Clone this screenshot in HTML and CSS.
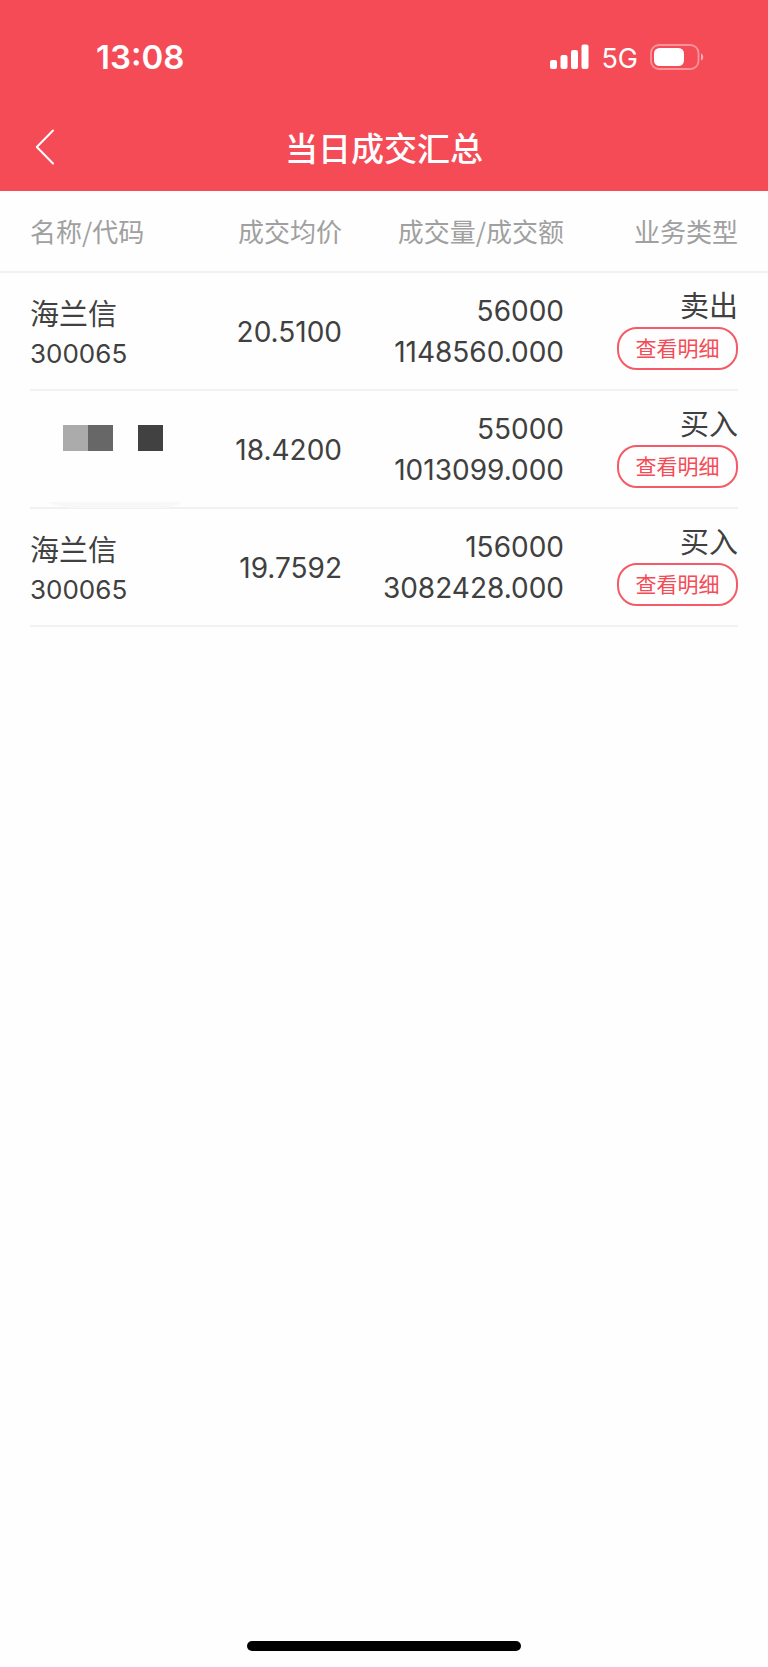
FILE: index.html
```html
<!DOCTYPE html>
<html lang="zh-CN">
<head>
<meta charset="utf-8">
<meta name="viewport" content="width=device-width, initial-scale=1">
<title>当日成交汇总</title>
<link rel="stylesheet" href="styles.css">
</head>
<body class="screen">
<header class="header">
  <div class="status">
    <span class="clock">13:08</span>
    <div class="indicators">
      <svg class="signal" width="39" height="26" viewBox="0 0 39 26" fill="#fff" aria-hidden="true">
        <rect x="0" y="16" width="7" height="9" rx="2"/>
        <rect x="10.500" y="11" width="7" height="14" rx="2"/>
        <rect x="21" y="6" width="7" height="19" rx="2"/>
        <rect x="31.500" y="0.500" width="7" height="24.500" rx="2"/>
      </svg>
      <span class="network">5G</span>
      <svg class="battery" width="54" height="26" viewBox="0 0 54 26" aria-hidden="true">
        <rect x="1" y="1" width="47.500" height="24" rx="8" fill="none" stroke="#fff" stroke-opacity=".4" stroke-width="1.800"/>
        <rect x="4" y="4" width="30" height="18" rx="5.500" fill="#fff"/>
        <path d="M51 9.500c3 1 3 6 0 7z" fill="#fff" fill-opacity=".55"/>
      </svg>
    </div>
  </div>
  <nav class="nav">
    <button class="back" type="button" aria-label="返回">
      <svg width="20" height="36" viewBox="0 0 20 36" fill="none" stroke="#fff" stroke-width="2" stroke-linecap="round" stroke-linejoin="round" aria-hidden="true"><path d="M18 1.500 1.800 18 18 34.500"/></svg>
    </button>
    <h1 class="title">当日成交汇总</h1>
  </nav>
</header>
<main class="content">
  <table class="trades">
    <thead>
      <tr class="head-row"><th class="name" scope="col">名称/代码</th><th scope="col">成交均价</th><th scope="col">成交量/成交额</th><th scope="col">业务类型</th></tr>
    </thead>
    <tbody>
      <tr class="row">
        <td class="name stock"><div>海兰信</div><div class="code">300065</div></td>
        <td class="num">20.5100</td>
        <td class="num"><div>56000</div><div>1148560.000</div></td>
        <td class="type"><div>卖出</div><button class="detail" type="button">查看明细</button></td>
      </tr>
      <tr class="row">
        <td class="name masked">
          <svg class="mask" width="162" height="119" viewBox="0 0 162 119" role="img" aria-label="已隐藏">
            <path d="M16 111h136q-8 6-20 6H49q-18 0-33-6z" fill="#f8f8f8"/>
            <path d="M33 34h25v26H33z" fill="#ababab"/>
            <path d="M58 34h25v26H58z" fill="#676767"/>
            <path d="M108 34h25v26h-25z" fill="#414141"/>
          </svg>
        </td>
        <td class="num">18.4200</td>
        <td class="num"><div>55000</div><div>1013099.000</div></td>
        <td class="type"><div>买入</div><button class="detail" type="button">查看明细</button></td>
      </tr>
      <tr class="row">
        <td class="name stock"><div>海兰信</div><div class="code">300065</div></td>
        <td class="num">19.7592</td>
        <td class="num"><div>156000</div><div>3082428.000</div></td>
        <td class="type"><div>买入</div><button class="detail" type="button">查看明细</button></td>
      </tr>
    </tbody>
  </table>
</main>
<footer class="home"><div class="home-bar"></div></footer>
</body>
</html>
```
FILE: styles.css
```css
* { box-sizing: border-box; }

.screen {
  margin: 0;
  min-height: 100vh;
  display: flex;
  flex-direction: column;
  background: #fefefe;
  color: #404040;
  font-family: Inter, "Noto Sans CJK SC", sans-serif;
}

.header {
  background: #f54b57;
  color: #fff;
}

.status {
  display: flex;
  justify-content: space-between;
  align-items: center;
  height: 106px;
  padding: 8px 64px 0 96px;
}

.clock {
  font-size: 33px;
  font-weight: 600;
}

.indicators {
  display: flex;
  align-items: center;
}

.network {
  padding-top: 2px;
  margin: 0 12px;
  font-size: 27px;
}

.nav {
  display: grid;
  grid-template-columns: 64px 1fr 64px;
  align-items: center;
  height: 85px;
  padding-bottom: 4px;
}

.back {
  display: flex;
  margin: 0;
  padding: 0 0 0 35px;
  border: 0;
  background: none;
}

.title {
  margin: 0;
  text-align: center;
  font-family: "Noto Sans CJK SC", sans-serif;
  font-size: 33px;
  font-weight: 500;
  line-height: 48px;
}

.content { flex: 1; }

.trades,
.trades thead,
.trades tbody {
  display: block;
}

.head-row,
.row {
  display: grid;
  grid-template-columns: 150fr 162fr 222fr 174fr;
  align-items: center;
}

.head-row {
  height: 82px;
  padding: 0 30px 2px;
  border-bottom: 2px solid #f1f1f1;
  color: #a0a0a0;
  font-size: 26px;
}

.head-row th {
  padding: 0;
  font-family: "Noto Sans CJK SC", sans-serif;
  font-weight: 400;
  text-align: right;
  white-space: nowrap;
}

.row {
  min-height: 118px;
  margin: 0 30px;
  border-bottom: 2px solid #f1f1f1;
  font-size: 28px;
  line-height: 41px;
}

.row td {
  padding: 0;
  text-align: right;
}

.head-row .name,
.row .name {
  text-align: left;
}

.row .num { padding-top: 2px; }

.row .stock {
  padding-top: 6px;
  font-size: 29px;
  line-height: 39px;
}

.stock .code { font-size: 26px; }

.row .masked {
  position: relative;
  align-self: stretch;
}

.mask {
  position: absolute;
  top: 0;
  left: 0;
}

.row .type {
  display: flex;
  flex-direction: column;
  align-items: flex-end;
  padding-bottom: 6px;
  font-size: 29px;
}

.detail {
  width: 121px;
  height: 43px;
  padding: 0 0 3px;
  border: 2px solid #f45b67;
  border-radius: 20px;
  background: none;
  color: #f54b57;
  font-family: "Noto Sans CJK SC", sans-serif;
  font-size: 21px;
  line-height: 30px;
}

.home {
  display: flex;
  justify-content: center;
  padding-bottom: 16px;
}

.home-bar {
  width: 274px;
  height: 10px;
  border-radius: 5px;
  background: #000;
}
```
